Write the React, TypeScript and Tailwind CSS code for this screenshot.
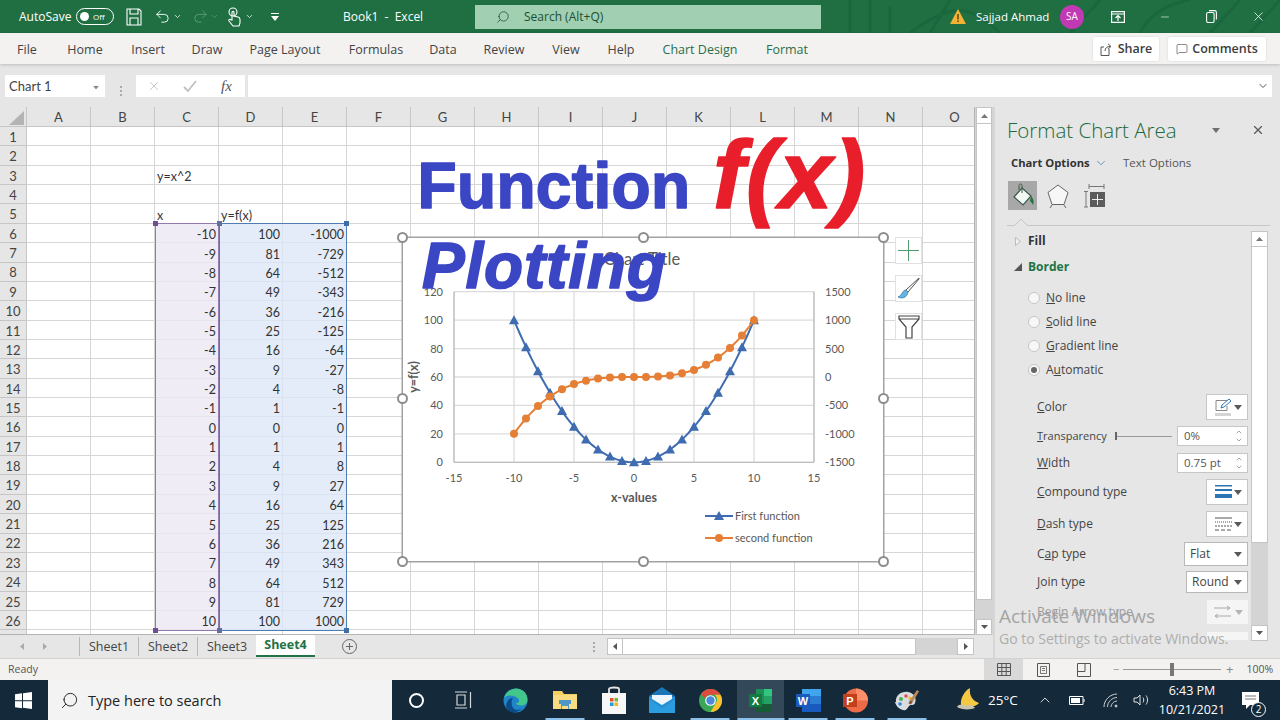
import React from "react";
import { ChevronDown, ChevronUp, MessageSquare, Minus, Redo2, Search, Undo2, X } from "lucide-react";

const COLS = ["A", "B", "C", "D", "E", "F", "G", "H", "I", "J", "K", "L", "M", "N", "O"];
const XS = Array.from({ length: 21 }, (_, i) => i - 10);

// chart scale, in page pixels
const px = (x: number) => 634 + 12 * x;
const py1 = (y: number) => 462.3 - 1.4217 * y;
const py2 = (y: number) => 377 - 0.05687 * y;
const dense = Array.from({ length: 81 }, (_, i) => -10 + i * 0.25);

const Caret = ({ c = "#595959" }: { c?: string }) => (
  <svg width="8" height="5" viewBox="0 0 8 5"><path d="M0 0h8L4 5z" fill={c} /></svg>
);

function cellText(row: number, col: string) {
  if (row === 3 && col === "C") return "y=x^2";
  if (row === 5 && col === "C") return "x";
  if (row === 5 && col === "D") return "y=f(x)";
  if (row >= 6 && row <= 26) {
    const x = row - 16;
    if (col === "C") return String(x);
    if (col === "D") return String(x * x);
    if (col === "E") return String(x * x * x);
  }
  return "";
}

const TitleBar = () => (
  <div className="relative flex h-[33px] shrink-0 items-center overflow-hidden bg-[#1f6f43] text-[12px] text-white">
    <svg className="absolute left-[830px] top-0 opacity-40" width="450" height="33" viewBox="0 0 450 33" fill="none" stroke="#175c36" strokeWidth="3">
      <path d="M20 33V0M40 33V0M60 33V6M100 33L120 0M240 33L270 0M310 33c10-20 30-30 50-33M380 33L410 0M420 33L450 0M80 33c40-30 60-30 90 0" />
    </svg>
    <span className="ml-[19px] w-[57px]">AutoSave</span>
    <div className="flex h-[17px] w-[38px] items-center rounded-full border border-white pl-[3px]">
      <div className="h-[9px] w-[9px] rounded-full bg-white" />
      <span className="ml-[4px] text-[8px]">Off</span>
    </div>
    <svg className="ml-[12px]" width="16" height="18" viewBox="0 0 16 18" fill="none" stroke="white" strokeWidth="1.1">
      <path d="M1 1h12l2 2v14H1zM4 1v5h8V1M4 17v-7h8v7" />
    </svg>
    <Undo2 className="ml-[12px]" size={17} strokeWidth={1.3} />
    <ChevronDown className="ml-[2px]" size={9} />
    <Redo2 className="ml-[10px] text-[#5d9c78]" size={17} strokeWidth={1.3} />
    <ChevronDown className="ml-[1px] text-[#5d9c78]" size={9} />
    <svg className="ml-[8px]" width="14" height="20" viewBox="0 0 14 20" fill="none" stroke="white" strokeWidth="1.1">
      <circle cx="6" cy="5" r="4" />
      <path d="M5 13V5.500c0-1.500 2-1.500 2 0V9l4 1c1.500.4 2 1 2 2.500V16l-1 3H6l-4-5c-.8-1.200.8-2.200 1.800-1.200z" />
    </svg>
    <ChevronDown className="ml-[4px]" size={9} />
    <svg className="ml-[17px]" width="8" height="8" viewBox="0 0 8 8" fill="white"><path d="M0 0h8v1H0zM0 3h8L4 8z" /></svg>
    <span className="ml-[64px] w-[132px] whitespace-pre">Book1  -  Excel</span>
    <div className="flex h-[24px] w-[346px] items-center bg-[#a0cfb1] text-[#1c4f33]">
      <Search className="ml-[21px] -scale-x-100" size={14} strokeWidth={1.3} />
      <span className="ml-[14px]">Search (Alt+Q)</span>
    </div>
    <svg className="relative ml-[129px]" width="16" height="15" viewBox="0 0 16 15"><path d="M8 0l8 15H0z" fill="#f2b233" /><path d="M7.300 5h1.400v5.500H7.300zM7.300 11.500h1.400V13H7.300z" fill="#5a3d08" /></svg>
    <span className="relative ml-[10px] w-[84px] text-[11.500px]">Sajjad Ahmad</span>
    <div className="relative flex h-[24px] w-[24px] items-center justify-center rounded-full bg-[#c239b3] text-[10px]">SA</div>
    <svg className="relative ml-[27px]" width="14" height="12" viewBox="0 0 14 12" fill="none" stroke="white" strokeWidth="1.2">
      <path d="M.6.6h12.800v10.800H.6zM.6 3h12.800" /><path d="M7 10V5M4.500 7L7 4.500 9.500 7" />
    </svg>
    <Minus className="relative ml-[34px]" size={12} strokeWidth={1.2} />
    <svg className="relative ml-[35px]" width="11" height="13" viewBox="0 0 11 13" fill="none" stroke="white" strokeWidth="1.1">
      <rect x=".6" y="2.500" width="7.500" height="10" rx="1.500" /><path d="M3 .6h5.500c1 0 1.900.9 1.900 1.900v7" />
    </svg>
    <X className="relative ml-[34px]" size={15} strokeWidth={1.2} />
  </div>
);

const RIBBON = [
  { t: "File", w: "w-[54px]" },
  { t: "Home", w: "w-[62px]" },
  { t: "Insert", w: "w-[64px]" },
  { t: "Draw", w: "w-[54px]" },
  { t: "Page Layout", w: "w-[102px]" },
  { t: "Formulas", w: "w-[80px]" },
  { t: "Data", w: "w-[54px]" },
  { t: "Review", w: "w-[68px]" },
  { t: "View", w: "w-[56px]" },
  { t: "Help", w: "w-[54px]" },
  { t: "Chart Design", w: "w-[104px] text-[#2b6e4a]" },
  { t: "Format", w: "w-[70px] text-[#2b6e4a]" },
];

const Ribbon = () => (
  <div className="relative z-10 flex h-[31px] shrink-0 items-center bg-[#f3f2f1] text-[12.500px] text-[#444] shadow-[0_1px_3px_rgba(0,0,0,0.18)]">
    {RIBBON.map((r) => (
      <span key={r.t} className={`pt-[3px] text-center ${r.w}`}>{r.t}</span>
    ))}
    <div className="ml-auto flex h-[24px] w-[66px] items-center justify-center gap-[5px] rounded-[2px] bg-white pt-[1px] font-semibold text-[#3d3d3d] shadow-[0_0_2px_rgba(0,0,0,0.15)]">
      <svg width="13" height="13" viewBox="0 0 13 13" fill="none" stroke="#555" strokeWidth="1"><path d="M9 6v6.500H1V4h3M5 8c0-3 2-4.500 5-4.500M8 .8l3 2.700-3 2.700" /></svg>
      Share
    </div>
    <div className="ml-[9px] mr-[14px] flex h-[24px] w-[98px] items-center justify-center gap-[4px] rounded-[2px] bg-white pt-[1px] font-semibold text-[#3d3d3d] shadow-[0_0_2px_rgba(0,0,0,0.15)]">
      <MessageSquare size={12} strokeWidth={1.2} />
      Comments
    </div>
  </div>
);

const FormulaBar = () => (
  <div className="flex h-[43px] shrink-0 bg-[#e6e6e6] pl-[5px] pr-[8px] pt-[11px]">
    <div className="flex h-[22px] w-[100px] items-center justify-between bg-white pl-[4px] pr-[5px] pt-[2px] font-['Lato',sans-serif] text-[13px] text-[#444]">
      Chart 1
      <span className="scale-75"><Caret c="#888" /></span>
    </div>
    <div className="flex w-[31px] flex-col items-center justify-center gap-[2px]">
      <div className="h-[2px] w-[2px] bg-[#aaa]" /><div className="h-[2px] w-[2px] bg-[#aaa]" /><div className="h-[2px] w-[2px] bg-[#aaa]" />
    </div>
    <div className="flex h-[22px] w-[109px] items-center bg-white">
      <X className="ml-[11px] text-[#b5b5b5]" size={14} strokeWidth={1.3} />
      <svg className="ml-[22px]" width="14" height="12" viewBox="0 0 14 12" fill="none" stroke="#c0c0c0" strokeWidth="1.800"><path d="M1 7l4 4 8-10" /></svg>
      <span className="ml-[24px] font-['Liberation_Serif',serif] text-[15px] italic text-[#555]">fx</span>
    </div>
    <div className="ml-[3px] flex h-[22px] flex-1 items-center justify-end bg-white pr-[3px]">
      <ChevronDown className="text-[#555]" size={12} />
    </div>
  </div>
);

const Cell = ({ row, col }: { row: number; col: string }) => {
  const text = row <= 26 ? cellText(row, col) : "";
  const numeric = row >= 6;
  let tint = "bg-white border-[#d6d6d6]";
  if (row >= 6 && row <= 26 && col === "C") tint = "bg-[#f0ecf6] border-[#e6e4ec]";
  if (row >= 6 && row <= 26 && (col === "D" || col === "E")) tint = "bg-[#e3ecf8] border-[#dae3ef]";
  return (
    <div className={`flex h-full w-[64px] shrink-0 items-end overflow-visible whitespace-nowrap border-b border-r px-[2px] text-[12.500px] leading-[15px] text-[#333] ${tint} ${numeric ? "justify-end" : "justify-start"}`}>
      {text}
    </div>
  );
};

const Handle = ({ className }: { className: string }) => (
  <div className={`absolute h-[11px] w-[11px] rounded-full border-2 border-[#8d8d8d] bg-white ${className}`} />
);

const Chart = () => (
  <div className="absolute left-[403px] top-[131px] h-[323px] w-[480px] bg-white ring-[1.5px] ring-[#a2a2a2]">
    <svg className="block h-full w-full font-['Lato',sans-serif]" viewBox="403 238 480 323">
      <text x="642" y="264.500" textAnchor="middle" fontSize="16.500" fill="#595959">Chart Title</text>
      {[0, 20, 40, 60, 80, 100, 120].map((v) => (
        <g key={v}>
          <line x1="454" x2="814" y1={py1(v)} y2={py1(v)} stroke="#dcdcdc" strokeWidth="1.300" />
          <text x="443" y={py1(v) + 4} textAnchor="end" fontSize="11" fill="#595959">{v}</text>
        </g>
      ))}
      {[-1500, -1000, -500, 0, 500, 1000, 1500].map((v) => (
        <text key={v} x="825" y={py2(v) + 4} fontSize="11" fill="#595959">{v}</text>
      ))}
      {[-15, -10, -5, 0, 5, 10, 15].map((v) => (
        <g key={v}>
          <line x1={px(v)} x2={px(v)} y1="291.700" y2="462.300" stroke="#dcdcdc" strokeWidth="1.300" />
          <text x={px(v)} y="482" textAnchor="middle" fontSize="11" fill="#595959">{v}</text>
        </g>
      ))}
      <line x1="454" x2="454" y1="291.700" y2="462.300" stroke="#bdbdbd" strokeWidth="1.200" />
      <line x1="814" x2="814" y1="291.700" y2="462.300" stroke="#bdbdbd" strokeWidth="1.200" />
      <line x1="454" x2="814" y1="462.300" y2="462.300" stroke="#bdbdbd" strokeWidth="1.200" />
      <text x="634" y="502" textAnchor="middle" fontSize="12.500" fontWeight="700" fill="#595959">x-values</text>
      <text transform="translate(418 377) rotate(-90)" textAnchor="middle" fontSize="12.500" fontWeight="700" fill="#595959">y=f(x)</text>

      <polyline points={dense.map((x) => `${px(x)},${py1(x * x)}`).join(" ")} fill="none" stroke="#3f6cb0" strokeWidth="2" />
      {XS.map((x) => (
        <path key={x} d={`M${px(x)} ${py1(x * x) - 5}l5 9h-10z`} fill="#3f6cb0" />
      ))}
      <polyline points={dense.map((x) => `${px(x)},${py2(x * x * x)}`).join(" ")} fill="none" stroke="#e57f35" strokeWidth="2" />
      {XS.map((x) => (
        <circle key={x} cx={px(x)} cy={py2(x * x * x)} r="4" fill="#e57f35" />
      ))}

      <line x1="705" x2="733" y1="516" y2="516" stroke="#3f6cb0" strokeWidth="2" />
      <path d="M719 511l5 9h-10z" fill="#3f6cb0" />
      <text x="735" y="519.500" fontSize="11" fill="#595959">First function</text>
      <line x1="705" x2="733" y1="538" y2="538" stroke="#e57f35" strokeWidth="2" />
      <circle cx="719" cy="538" r="4" fill="#e57f35" />
      <text x="735" y="541.500" fontSize="11" fill="#595959">second function</text>
    </svg>
    <Handle className="-left-[6px] -top-[6px]" />
    <Handle className="left-[235px] -top-[6px]" />
    <Handle className="-right-[6px] -top-[6px]" />
    <Handle className="-left-[6px] top-[155px]" />
    <Handle className="-right-[6px] top-[155px]" />
    <Handle className="-bottom-[6px] -left-[6px]" />
    <Handle className="-bottom-[6px] left-[235px]" />
    <Handle className="-bottom-[6px] -right-[6px]" />
  </div>
);

const ChartButtons = () => (
  <div className="absolute left-[895px] top-[130px] flex flex-col gap-[11px]">
    <div className="flex h-[27px] w-[27px] items-center justify-center border border-[#e2e2e2] bg-white">
      <svg width="21" height="21" viewBox="0 0 21 21" stroke="#4f9a6c" strokeWidth="1"><path d="M10.500 0v21M0 10.500h21" /></svg>
    </div>
    <div className="flex h-[27px] w-[27px] items-center justify-center border border-[#e2e2e2] bg-white">
      <svg width="23" height="23" viewBox="0 0 23 23">
        <path d="M22 1L9 13l2 2L22 2z" fill="white" stroke="#555" strokeWidth="1" />
        <path d="M9 13c-4 0-3 5-8 7 4 2 9 1 10-5z" fill="#63b4e0" stroke="#3d7fa8" strokeWidth=".8" />
      </svg>
    </div>
    <div className="flex h-[27px] w-[27px] items-center justify-center border border-[#e2e2e2] bg-white">
      <svg width="22" height="24" viewBox="0 0 22 24" fill="none" stroke="#444" strokeWidth="1.200"><path d="M1 1h20v3l-7 8v11H8V12L1 4zM1 4h20" /></svg>
    </div>
  </div>
);

// el titulo va encima de la hoja y del grafico
const WordArt = () => (
  <svg className="pointer-events-none absolute left-0 top-0 font-['Liberation_Sans',Arial,sans-serif] font-bold" width="975" height="528" viewBox="0 107 975 528" strokeLinejoin="round" strokeLinecap="round" strokeWidth="1.600">
    <text x="417.500" y="207.500" fontSize="64" letterSpacing=".35" fill="#3b46c4" stroke="#3b46c4">Function</text>
    <text x="713" y="207.500" fontSize="96" fontStyle="italic" letterSpacing="1" fill="#e81f2b" stroke="#e81f2b">f(x)</text>
    <text x="422" y="287.500" fontSize="64" fontStyle="italic" letterSpacing=".8" fill="#3b46c4" stroke="#3b46c4">Plotting</text>
  </svg>
);

const Sheet = () => (
  <div className="relative h-[528px] w-[975px] overflow-hidden border-b border-r border-[#b4b4b4] bg-white font-['Lato',sans-serif]">
    <div className="flex h-[20px] bg-[#e6e6e6]">
      <div className="flex w-[27px] shrink-0 items-end justify-end border-b border-r border-[#c6c6c6] pb-[1px] pr-[2px]">
        <svg width="15" height="14" viewBox="0 0 15 14"><path d="M15 0v14H0z" fill="#b4b4b4" /></svg>
      </div>
      {COLS.map((c) => (
        <div key={c} className="flex w-[64px] shrink-0 items-center justify-center border-b border-r border-[#c6c6c6] pt-[3px] text-[13px] text-[#444]">{c}</div>
      ))}
    </div>
    {Array.from({ length: 27 }, (_, i) => i + 1).map((r) => (
      <div key={r} className="flex h-[19.360px]">
        <div className="flex w-[27px] shrink-0 items-center justify-center border-b border-r border-[#c6c6c6] bg-[#e6e6e6] pt-[3px] text-[13px] text-[#444]">{r <= 26 ? r : ""}</div>
        {COLS.map((c) => (
          <Cell key={c} row={r} col={c} />
        ))}
      </div>
    ))}
    {/* rangos del grafico */}
    <div className="absolute left-[155px] top-[116px] h-[408px] w-[64px] border-[1.5px] border-[#9479ae]">
      <div className="absolute -left-[3px] -top-[3px] h-[5px] w-[5px] bg-[#6f4f92]" />
      <div className="absolute -bottom-[3px] -left-[3px] h-[5px] w-[5px] bg-[#6f4f92]" />
    </div>
    <div className="absolute left-[219px] top-[116px] h-[408px] w-[128px] border-[1.5px] border-[#4f7db3]">
      <div className="absolute -left-[3px] -top-[3px] h-[5px] w-[5px] bg-[#5f6fa0]" />
      <div className="absolute -right-[3px] -top-[3px] h-[5px] w-[5px] bg-[#3f6ea6]" />
      <div className="absolute -bottom-[3px] -right-[3px] h-[5px] w-[5px] bg-[#3f6ea6]" />
      <div className="absolute -bottom-[3px] -left-[3px] h-[5px] w-[5px] bg-[#5f6fa0]" />
    </div>
    <Chart />
    <ChartButtons />
    <WordArt />
  </div>
);

const VScroll = () => (
  <div className="flex h-[528px] w-[18px] flex-col bg-[#d4d4d4] pl-[1px] pr-[1px]">
    <div className="flex h-[17px] shrink-0 items-center justify-center border border-[#c4c4c4] bg-white">
      <svg width="7" height="4" viewBox="0 0 7 4"><path d="M0 4h7L3.500 0z" fill="#777" /></svg>
    </div>
    <div className="h-[476px] shrink-0 border border-t-0 border-[#c4c4c4] bg-white" />
    <div className="flex-1" />
    <div className="flex h-[16px] shrink-0 items-center justify-center border border-[#c4c4c4] bg-white">
      <svg width="7" height="4" viewBox="0 0 7 4"><path d="M0 0h7L3.500 4z" fill="#555" /></svg>
    </div>
  </div>
);

const TabsBar = () => (
  <div className="flex h-[23px] items-center bg-[#e6e6e6] text-[12.500px] text-[#444]">
    <div className="flex w-[79px] items-center justify-start pl-[20px]">
      <svg width="4" height="7" viewBox="0 0 4 7"><path d="M4 0v7L0 3.500z" fill="#aaa" /></svg>
      <svg className="ml-[19px]" width="4" height="7" viewBox="0 0 4 7"><path d="M0 0v7l4-3.500z" fill="#aaa" /></svg>
    </div>
    {["Sheet1", "Sheet2", "Sheet3"].map((s) => (
      <div key={s} className="flex h-[19px] w-[59px] items-center justify-center border-l border-[#b8b8b8] pt-[1px]">{s}</div>
    ))}
    <div className="-mt-[2px] flex h-[23px] w-[59px] items-center justify-center border-b-2 border-[#217346] bg-white pt-[2px] font-bold text-[#217346]">Sheet4</div>
    <svg className="ml-[27px]" width="15" height="15" viewBox="0 0 15 15" fill="none" stroke="#666" strokeWidth="1"><circle cx="7.500" cy="7.500" r="7" /><path d="M7.500 4v7M4 7.500h7" /></svg>
    <div className="ml-[236px] flex flex-col gap-[2px]">
      <div className="h-[2px] w-[2px] bg-[#aaa]" /><div className="h-[2px] w-[2px] bg-[#aaa]" /><div className="h-[2px] w-[2px] bg-[#aaa]" />
    </div>
    <div className="ml-[12px] flex h-[17px] w-[367px] items-stretch bg-[#d4d4d4]">
      <div className="flex w-[16px] items-center justify-center border border-[#c4c4c4] bg-white">
        <svg width="4" height="7" viewBox="0 0 4 7"><path d="M4 0v7L0 3.500z" fill="#555" /></svg>
      </div>
      <div className="w-[293px] border-y border-r border-[#c4c4c4] bg-white" />
      <div className="flex-1" />
      <div className="flex w-[17px] items-center justify-center border border-[#c4c4c4] bg-white">
        <svg width="4" height="7" viewBox="0 0 4 7"><path d="M0 0v7l4-3.500z" fill="#555" /></svg>
      </div>
    </div>
  </div>
);

const Radio = ({ label, on }: { label: React.ReactNode; on?: boolean }) => (
  <div className="ml-[21px] flex h-[24px] items-center">
    <div className="flex h-[12px] w-[12px] items-center justify-center rounded-full border border-[#c6c6c6] bg-[#f7f7f7]">
      {on && <div className="h-[6px] w-[6px] rounded-full bg-[#666]" />}
    </div>
    <span className="ml-[6px] text-[12px] text-[#444]">{label}</span>
  </div>
);

const Row = ({ label, h, mt, children, dim }: { label: React.ReactNode; h: string; mt: string; children: React.ReactNode; dim?: boolean }) => (
  <div className={`flex items-center justify-between pl-[30px] pr-[3px] text-[12px] ${h} ${mt} ${dim ? "text-[#9b9b9b]" : "text-[#444]"}`}>
    <span>{label}</span>
    {children}
  </div>
);

const PickBox = ({ children }: { children: React.ReactNode }) => (
  <div className="flex h-full w-[42px] items-center justify-between border border-[#c6c6c6] bg-white pl-[8px] pr-[5px]">
    {children}
    <Caret />
  </div>
);

const Spin = ({ v }: { v: string }) => (
  <div className="flex h-full w-[71px] items-center justify-between border border-[#c6c6c6] bg-white pl-[6px] pr-[4px] text-[11.500px] text-[#555]">
    {v}
    <div className="flex flex-col text-[#777]">
      <ChevronUp size={8} />
      <ChevronDown size={8} />
    </div>
  </div>
);

const Select = ({ v, w }: { v: string; w: string }) => (
  <div className={`flex h-full items-center justify-between border border-[#b8b8b8] bg-white pl-[5px] pr-[5px] ${w}`}>
    {v}
    <Caret />
  </div>
);

const Pane = () => (
  <div className="relative h-[551px] w-[287px] overflow-hidden border-l-2 border-[#d6d6d6] bg-[#e6e6e6] pl-[12px]">
    <div className="flex h-[46px] items-center text-[20.500px] font-light text-[#20693f]">
      <span className="w-[205px]">Format Chart Area</span>
      <Caret c="#707070" />
      <X className="ml-[31px] text-[#555]" size={14} strokeWidth={2} />
    </div>
    <div className="flex h-[20px] items-center pl-[4px] text-[11.500px] text-[#555]">
      <span className="w-[79px] whitespace-nowrap text-[11.250px] font-bold text-[#333]">Chart Options</span>
      <ChevronDown className="ml-[4px] text-[#2e75b6]" size={14} strokeWidth={1.2} />
      <span className="ml-[15px]">Text Options</span>
    </div>
    <div className="mt-[8px] flex h-[29px] items-center">
      <div className="ml-[1px] flex h-[29px] w-[29px] items-center justify-center bg-[#a8a8a8]">
        <svg width="24" height="25" viewBox="0 0 24 25">
          <path d="M11 5l9 8-8 9-9-8z" fill="#f2f7f3" stroke="#3c5a48" strokeWidth="1.200" />
          <path d="M8 7V2.500c0-2 3-2 3 0V10" fill="none" stroke="#3c5a48" strokeWidth="1" />
          <path d="M20 13c3 3 3 6 2 9-1-2-2-3-3-4z" fill="#217346" />
        </svg>
      </div>
      <svg className="ml-[8px]" width="26" height="26" viewBox="0 0 26 26" fill="none">
        <path d="M13 2l10 7.500-4 12H7l-4-12z" fill="#f7f7f7" stroke="#666" strokeWidth="1" />
        <path d="M5 25l2-3M21 25l-2-3" stroke="#666" strokeWidth="1" />
      </svg>
      <svg className="ml-[12px]" width="22" height="26" viewBox="0 0 22 26" fill="none">
        <path d="M6 3.500h15M6 1v5M21 1v5M1 8.500h4M1 24h4M3 8.500V24" stroke="#777" strokeWidth="1" />
        <rect x="7" y="9" width="15" height="15" fill="#5c5c5c" />
        <path d="M14.500 11v11M9 16.500h11" stroke="white" strokeWidth=".9" />
      </svg>
    </div>
    <div className="relative mr-[10px] mt-[15px] h-[1px] bg-[#c6c6c6]">
      <svg className="absolute left-[7px] -top-[6px]" width="14" height="7" viewBox="0 0 14 7"><path d="M0 7l7-7 7 7" fill="#e6e6e6" stroke="#c6c6c6" /></svg>
    </div>
    <div className="mt-[5px] flex h-[410px] w-[261px] items-stretch">
      <div className="flex-1 overflow-hidden pt-[1px]">
        <div className="flex h-[18px] items-center pl-[8px] text-[12px] font-bold text-[#333]">
          <svg width="6" height="9" viewBox="0 0 6 9"><path d="M.5.5v8l5-4z" fill="#f2f2f2" stroke="#bbb" /></svg>
          <span className="ml-[7px]">Fill</span>
        </div>
        <div className="mt-[8px] flex h-[18px] items-center pl-[7px] text-[12px] font-bold text-[#217346]">
          <svg width="8" height="8" viewBox="0 0 8 8"><path d="M8 0v8H0z" fill="#555" /></svg>
          <span className="ml-[6px]">Border</span>
        </div>
        <div className="mt-[10px]">
          <Radio label={<><u>N</u>o line</>} />
          <Radio label={<><u>S</u>olid line</>} />
          <Radio label={<><u>G</u>radient line</>} />
          <Radio label={<>A<u>u</u>tomatic</>} on />
        </div>
        <Row label={<><u>C</u>olor</>} h="h-[26px]" mt="mt-[12px]">
          <PickBox>
            <svg width="17" height="19" viewBox="0 0 17 19" fill="none">
              <path d="M12 2.500H1v10h11V8" stroke="#888" strokeWidth="1" />
              <path d="M6 10l1-3 7-6 2 2-7 6z" fill="white" stroke="#2e75b6" strokeWidth="1" />
              <rect x="0" y="15" width="16" height="3" fill="#d4d4d4" />
            </svg>
          </PickBox>
        </Row>
        <Row label={<span className="text-[11px]"><u>T</u>ransparency</span>} h="h-[20px]" mt="mt-[6px]">
          <div className="ml-[8px] flex items-center">
            <div className="h-[8px] w-[2px] bg-[#666]" />
            <div className="h-[1px] w-[55px] bg-[#999]" />
          </div>
          <div className="ml-[5px] h-full"><Spin v="0%" /></div>
        </Row>
        <Row label={<><u>W</u>idth</>} h="h-[20px]" mt="mt-[7px]">
          <Spin v="0.75 pt" />
        </Row>
        <Row label={<><u>C</u>ompound type</>} h="h-[26px]" mt="mt-[6px]">
          <PickBox>
            <svg width="17" height="14" viewBox="0 0 17 14"><path d="M0 0h17v1.500H0zM0 4h17v2H0zM0 9h17v4H0z" fill="#2e75b6" /></svg>
          </PickBox>
        </Row>
        <Row label={<><u>D</u>ash type</>} h="h-[26px]" mt="mt-[6px]">
          <PickBox>
            <svg width="17" height="14" viewBox="0 0 17 14" fill="none" stroke="#555"><path d="M0 1h17" /><path d="M0 5h17" strokeDasharray="1 1" /><path d="M0 9h17" strokeDasharray="2 1" /><path d="M0 13h17" strokeDasharray="4 2" /></svg>
          </PickBox>
        </Row>
        <Row label={<>C<u>a</u>p type</>} h="h-[24px]" mt="mt-[5px]">
          <Select v="Flat" w="w-[64px]" />
        </Row>
        <Row label={<><u>J</u>oin type</>} h="h-[22px]" mt="mt-[5px]">
          <Select v="Round" w="w-[62px]" />
        </Row>
        <Row label={<>Begin Arrow type</>} h="h-[24px]" mt="mt-[7px]" dim>
          <div className="flex h-full w-[41px] items-center justify-between bg-[#f5f5f5] pl-[7px] pr-[5px]">
            <svg width="17" height="15" viewBox="0 0 17 15" fill="none" stroke="#a8a8a8"><path d="M0 3h16M13 1l3 2-3 2M1 11h16M4 9l-3 2 3 2" /></svg>
            <Caret c="#b5b5b5" />
          </div>
        </Row>
        <div className="ml-auto mr-[3px] mt-[8px] h-[8px] w-[41px] bg-[#f5f5f5]" />
      </div>
      <div className="flex w-[17px] flex-col bg-[#d4d4d4]">
        <div className="flex h-[16px] shrink-0 items-center justify-center border border-[#c4c4c4] bg-white">
          <svg width="7" height="4" viewBox="0 0 7 4"><path d="M0 4h7L3.500 0z" fill="#777" /></svg>
        </div>
        <div className="h-[296px] shrink-0 border border-t-0 border-[#c4c4c4] bg-white" />
        <div className="flex-1" />
        <div className="flex h-[16px] shrink-0 items-center justify-center border border-[#c4c4c4] bg-white">
          <svg width="7" height="4" viewBox="0 0 7 4"><path d="M0 0h7L3.500 4z" fill="#555" /></svg>
        </div>
      </div>
    </div>
    {/* marca de agua de windows */}
    <div className="pointer-events-none absolute left-[4px] top-[497px] text-[19px] leading-[24px] text-[#a4a4a4]">Activate Windows</div>
    <div className="pointer-events-none absolute left-[4px] top-[523px] whitespace-nowrap text-[14px] leading-[18px] text-[#adadad]">Go to Settings to activate Windows.</div>
  </div>
);

const StatusBar = () => (
  <div className="flex h-[22px] shrink-0 items-center border-t border-[#d2d2d2] bg-[#f3f2f1] pl-[8px] text-[10.500px] text-[#555]">
    <span className="w-[976px]">Ready</span>
    <div className="flex h-full w-[39px] items-center justify-center bg-[#d9d9d9]">
      <svg width="14" height="13" viewBox="0 0 14 13" fill="none" stroke="#555"><path d="M.5.500h13v12H.5zM.5 4.500h13M.5 8.500h13M4.800.500v12M9.200.500v12" /></svg>
    </div>
    <div className="flex w-[41px] justify-center">
      <svg width="13" height="14" viewBox="0 0 13 14" fill="none" stroke="#555"><path d="M.5.500h12v13H.5z" /><path d="M3.500 3.500h6v7h-6zM5 5.500h3M5 7.500h3" strokeWidth=".8" /></svg>
    </div>
    <div className="flex w-[39px] justify-center">
      <svg width="14" height="14" viewBox="0 0 14 14" fill="none" stroke="#555"><path d="M.5.500h13v13H.5zM.5 8.500h7.500V.5" /></svg>
    </div>
    <span className="ml-[10px] w-[8px] text-[#888]">−</span>
    <div className="relative ml-[2px] h-[1px] w-[98px] bg-[#999]">
      <div className="absolute left-[47px] -top-[6px] h-[13px] w-[4px] bg-[#777]" />
    </div>
    <span className="ml-[5px] text-[13px] text-[#888]">+</span>
    <span className="ml-[13px]">100%</span>
  </div>
);

const AppIcon = ({ name }: { name: string }) => {
  if (name === "edge")
    return (
      <svg width="25" height="25" viewBox="0 0 25 25">
        <circle cx="12.500" cy="12.500" r="12" fill="#1f84c9" />
        <path d="M1 10C3 3 9 .5 13 .5c7 0 11.500 5 11.500 11 0 4-3 6-6.500 6-3 0-5-1-5-2.500 3 0 4-2 2-4.500C12 7 4 6 1 10z" fill="#43c68a" />
        <path d="M3 18c1-6 4-8 7-8-2 3-2 8 1 11 2 1.500 6 1 8-.5-3 3-7 4-10 3.500-3-.5-5-3-6-6z" fill="#0c4a88" />
      </svg>
    );
  if (name === "folder")
    return (
      <svg width="26" height="24" viewBox="0 0 26 24">
        <path d="M1 3h9l2 3h13v15H1z" fill="#f3cf62" />
        <path d="M1 7h24v14H1z" fill="#f7dd80" />
        <path d="M7 16V12h12v4h-2v5h-8v-5z" fill="#4f97c7" />
        <path d="M10 18h6v3h-6z" fill="#f7dd80" />
      </svg>
    );
  if (name === "store")
    return (
      <svg width="24" height="28" viewBox="0 0 24 28">
        <path d="M7 8V3c0-2 10-2 10 0v5" fill="none" stroke="#e6e6e6" strokeWidth="1.800" />
        <path d="M0 7h24v21H0z" fill="#f7f7f7" />
        <path d="M8 12h3.500v3.500H8z" fill="#e8542e" /><path d="M12.500 12H16v3.500h-3.500z" fill="#7cb63c" />
        <path d="M8 16.500h3.500V20H8z" fill="#1d9ee0" /><path d="M12.500 16.500H16V20h-3.500z" fill="#f3b61f" />
      </svg>
    );
  if (name === "mail")
    return (
      <svg width="26" height="26" viewBox="0 0 26 26">
        <path d="M13 0l13 9v17H0V9z" fill="#1a76b8" />
        <path d="M0 10h26v16H0z" fill="#2c9ce0" />
        <path d="M3 8h20v4l-10 6-10-6z" fill="#ecf6fc" />
        <path d="M0 10l13 9 13-9v2l-13 9L0 12z" fill="#1a76b8" opacity=".4" />
      </svg>
    );
  if (name === "chrome")
    return (
      <svg width="23" height="23" viewBox="0 0 24 24">
        <circle cx="12" cy="12" r="12" fill="#3aa757" />
        <path d="M12 0a12 12 0 0110.400 6H12a6 6 0 00-5.600 3.800L2.100 5.500A12 12 0 0112 0z" fill="#de4a3e" />
        <path d="M22.400 6A12 12 0 0112 24l5.200-9a6 6 0 00-.9-9z" fill="#fbc02d" />
        <circle cx="12" cy="12" r="5.600" fill="white" />
        <circle cx="12" cy="12" r="4.400" fill="#4a89dc" />
      </svg>
    );
  if (name === "excel")
    return (
      <svg width="24" height="25" viewBox="0 0 24 25">
        <path d="M7 1h16v23H7z" fill="#1f8f56" />
        <path d="M15 1h8v7h-8z" fill="#33c481" /><path d="M15 8h8v8h-8z" fill="#21a366" /><path d="M7 16h16v8H7z" fill="#185c37" />
        <path d="M0 6h13v13H0z" fill="#107c41" />
        <text x="6.500" y="16.500" textAnchor="middle" fontSize="11" fontWeight="700" fill="white" fontFamily="Liberation Sans">X</text>
      </svg>
    );
  if (name === "word")
    return (
      <svg width="25" height="25" viewBox="0 0 25 25">
        <path d="M6 1h19v23H6z" fill="#2b7cd3" />
        <path d="M6 1h19v7H6z" fill="#41a5ee" /><path d="M6 16h19v8H6z" fill="#185abd" />
        <path d="M0 6h14v13H0z" fill="#185abd" />
        <text x="7" y="16.500" textAnchor="middle" fontSize="11" fontWeight="700" fill="white" fontFamily="Liberation Sans">W</text>
      </svg>
    );
  if (name === "ppt")
    return (
      <svg width="25" height="25" viewBox="0 0 25 25">
        <circle cx="13" cy="12.500" r="12" fill="#ed6c47" />
        <path d="M13 .5a12 12 0 0112 12H13z" fill="#ff8f6b" />
        <path d="M0 6h14v13H0z" fill="#c43e1c" />
        <text x="7" y="16.500" textAnchor="middle" fontSize="11" fontWeight="700" fill="white" fontFamily="Liberation Sans">P</text>
      </svg>
    );
  return (
    <svg width="25" height="25" viewBox="0 0 25 25">
      <path d="M1 14C0 7 7 3 13 4c6 1 9 6 7 11-1 3-4 1-6 3-2 3-3 5-6 4-4-1-7-4-8-8z" fill="#d9dde2" />
      <circle cx="6" cy="11" r="2" fill="#4caf50" /><circle cx="11" cy="8" r="1.800" fill="#e84e4e" />
      <circle cx="5" cy="16" r="1.800" fill="#2f86d6" /><circle cx="15" cy="10" r="1.600" fill="#f3b61f" />
      <path d="M22 2l2 1.500-6 10-3-1.500z" fill="#b98a5a" /><path d="M15 12l3 1.500-2 3-2.500-1z" fill="#8a5a34" />
    </svg>
  );
};

const APPS = [
  { n: "edge", w: "w-[56px]" },
  { n: "folder", w: "w-[44px]", bar: true },
  { n: "store", w: "w-[54px]" },
  { n: "mail", w: "w-[42px]" },
  { n: "chrome", w: "w-[54px]", bar: true },
  { n: "excel", w: "w-[47px] bg-[#33495a]", bar: true, full: true },
  { n: "word", w: "w-[48px]", bar: true },
  { n: "ppt", w: "w-[46px]", bar: true },
  { n: "paint", w: "w-[58px]", bar: true },
];

const Taskbar = () => (
  <div className="flex h-[40px] shrink-0 items-stretch bg-[#14293a] text-white">
    <div className="flex w-[48px] items-center justify-center pr-[2px]">
      <svg width="17" height="17" viewBox="0 0 17 17" fill="white"><path d="M0 2.300l7-1v7H0zM8 1.200L17 0v8.300H8zM0 9.300h7v7l-7-1zM8 9.300h9V17l-9-1.200z" /></svg>
    </div>
    <div className="flex w-[344px] items-center bg-[#f3f3f3] text-[14.500px] text-[#222]">
      <Search className="ml-[12px] -scale-x-100" size={19} strokeWidth={1.2} />
      <span className="ml-[9px] pt-[1px]">Type here to search</span>
    </div>
    <div className="flex w-[48px] items-center justify-center">
      <div className="h-[15px] w-[15px] rounded-full border-2 border-white" />
    </div>
    <div className="flex w-[47px] items-center justify-center">
      <svg width="17" height="18" viewBox="0 0 17 18" fill="none" stroke="#d8d8d8" strokeWidth="1.200"><path d="M0 1h12M0 17h12M2 4h8v10H2zM15.500 1v16" /></svg>
    </div>
    {APPS.map((a) => (
      <div key={a.n} className={`relative flex items-center justify-center ${a.w}`}>
        <AppIcon name={a.n} />
        {a.bar && <div className={`absolute bottom-0 left-1/2 h-[2px] -translate-x-1/2 bg-[#8cc0e8] ${a.full ? "w-full" : "w-[39px]"}`} />}
      </div>
    ))}
    <div className="ml-[16px] flex w-[32px] items-center justify-center">
      <svg width="26" height="26" viewBox="0 0 26 26">
        <path d="M15 1c-1 8 3 13 9 15-3 4-12 5-17 3C4 17 7 5 15 1z" fill="#f5c842" />
        <path d="M2 20c2-3 6-3 8-1 3-2 8-1 10 2-4 2-14 2-18-1z" fill="#c9c3b0" />
      </svg>
    </div>
    <span className="ml-[4px] flex w-[39px] items-center pt-[1px] text-[13.500px]">25°C</span>
    <div className="flex w-[36px] items-center justify-center"><ChevronUp size={16} strokeWidth={1.2} /></div>
    <div className="flex w-[28px] items-center justify-center">
      <svg width="16" height="9" viewBox="0 0 16 9" fill="none" stroke="white"><path d="M.5.500h13.500v8H.5z" /><path d="M2 2h9v5H2z" fill="white" stroke="none" /><path d="M15 3v3" /></svg>
    </div>
    <div className="flex w-[38px] items-center justify-center">
      <svg width="15" height="15" viewBox="0 0 15 15" fill="none" stroke="#cfcfcf" strokeWidth="1"><path d="M1 14c0-7 6-13 13-13M4.500 14c0-5 4.500-9.500 9.500-9.500M8 14c0-3 3-6 6-6" /><circle cx="13" cy="13" r="1" fill="#cfcfcf" /></svg>
    </div>
    <div className="flex w-[24px] items-center justify-center">
      <svg width="16" height="14" viewBox="0 0 16 14" fill="none" stroke="#e2e2e2" strokeWidth="1"><path d="M1 5h3l3-3v10L4 9H1zM10 4.500c1 1.500 1 3.500 0 5M13 2.500c2 2.500 2 6.500 0 9" /></svg>
    </div>
    <div className="flex w-[78px] flex-col items-center justify-center text-[12.500px] leading-[19px]">
      <span>6:43 PM</span>
      <span>10/21/2021</span>
    </div>
    <div className="relative flex w-[39px] items-center justify-center">
      <svg width="17" height="17" viewBox="0 0 17 17" fill="white"><path d="M0 0h17v13H8l-4 4v-4H0z" /><path d="M3 4h11M3 7h11" stroke="#777" /></svg>
      <div className="absolute bottom-[3px] left-[20px] flex h-[15px] w-[15px] items-center justify-center rounded-full border border-white bg-[#14293a] text-[10px]">2</div>
    </div>
  </div>
);

export default function App() {
  return (
    <div className="flex h-[720px] w-[1280px] flex-col overflow-hidden font-['Open_Sans',sans-serif]">
      <TitleBar />
      <Ribbon />
      <FormulaBar />
      <div className="flex h-[551px] shrink-0">
        <div className="w-[993px] shrink-0">
          <div className="flex">
            <Sheet />
            <VScroll />
          </div>
          <TabsBar />
        </div>
        <Pane />
      </div>
      <StatusBar />
      <Taskbar />
    </div>
  );
}
